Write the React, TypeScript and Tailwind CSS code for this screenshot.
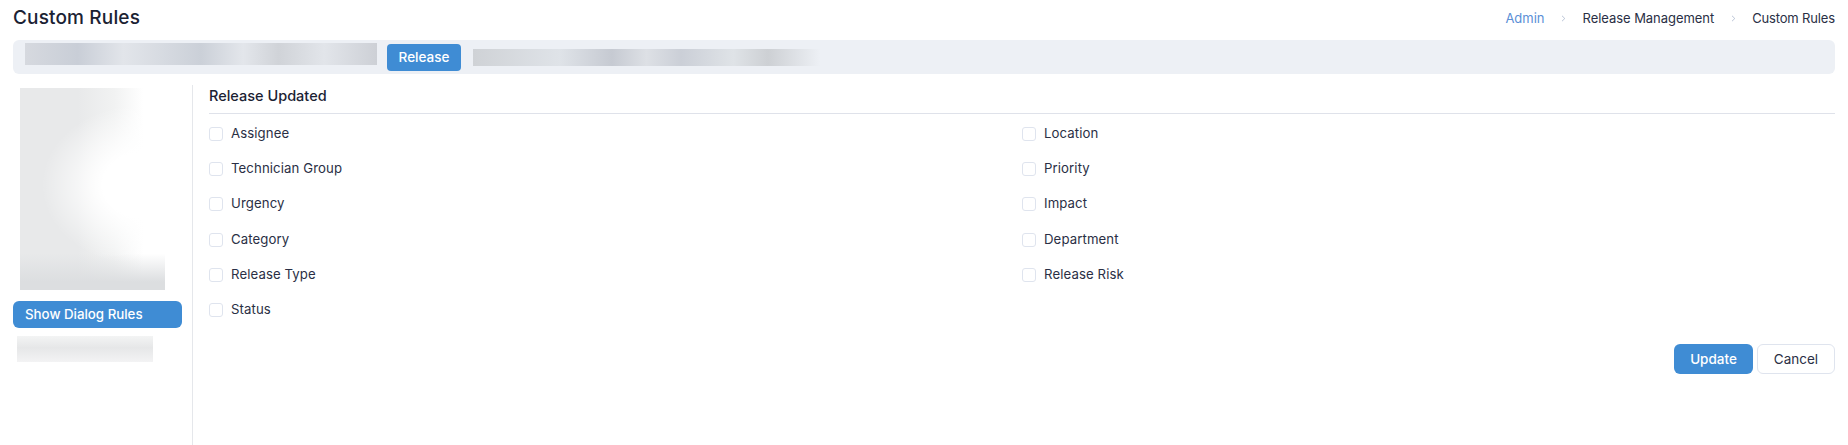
const leftRules = ["Assignee", "Technician Group", "Urgency", "Category", "Release Type", "Status"];
const rightRules = ["Location", "Priority", "Impact", "Department", "Release Risk"];

function Rule({ label }: { label: string }) {
  return (
    <label className="flex h-[35.3px] items-center">
      <span className="h-[14px] w-[14px] shrink-0 rounded-[3px] border border-[#dfe4ee] bg-white" />
      <span className="ml-[8px] text-[13.2px] tracking-[0.1px] text-[#2a2f45]">{label}</span>
    </label>
  );
}

function Chevron() {
  return (
    <svg width="5" height="7" viewBox="0 0 5 7" fill="none" className="mx-[16.5px]">
      <path d="M1 .8 3.8 3.5 1 6.2" stroke="#a9b6cc" strokeWidth="0.8" />
    </svg>
  );
}

export default function App() {
  return (
    <div className="flex h-[445px] w-[1848px] flex-col overflow-hidden bg-white px-[13px] font-['Inter','Liberation_Sans',sans-serif] text-[#2a2f45]">
      <div className="flex h-[40px] shrink-0 items-center justify-between pb-[3px]">
        <h1 className="text-[19px] font-medium tracking-[0.15px] text-[#1b2233]">Custom Rules</h1>
        <nav className="flex items-center text-[13px]">
          <span className="text-[#5b8fd6]">Admin</span>
          <Chevron />
          <span className="tracking-[-0.05px]">Release Management</span>
          <Chevron />
          <span className="tracking-[-0.15px]">Custom Rules</span>
        </nav>
      </div>

      <div className="flex h-[34px] shrink-0 items-center rounded-[6px] bg-[#edf0f5] pl-[12px]">
        <div className="-mt-[7px] h-[22px] w-[352px] bg-[linear-gradient(90deg,#d6d9df,#c9ced7_15%,#e2e5ea_28%,#cbd0d8_50%,#e3e6eb_62%,#d0d3d8_72%,#e2e5ea_85%,#cdd0d6)]" />
        <button className="ml-[10px] h-[27px] w-[74px] rounded-[4px] bg-[#3f8cd4] text-[13.5px] font-medium text-white">Release</button>
        <div className="ml-[12px] h-[17px] w-[347px] bg-[linear-gradient(90deg,#cfd2d6,#dfe3e8_25%,#c6cad2_40%,#dde0e5_50%,#cbcfd7_60%,#dfe3e7_75%,#cdd0d4_85%,#edf0f5)]" />
      </div>

      <div className="flex min-h-0 flex-1 pt-[11px]">
        <aside className="flex w-[179px] shrink-0 flex-col">
          <div className="ml-[7px] mt-[3px] h-[202px] w-[145px] bg-[linear-gradient(180deg,#ffffff00_82%,#dcdee0_96%),radial-gradient(ellipse_70%_40%_at_85%_48%,#ffffff_40%,#ffffff00),linear-gradient(90deg,#e8e9ea_40%,#f1f2f2_65%,#ffffff_85%)]" />
          <button className="mt-[11px] h-[27px] w-[169px] rounded-[6px] bg-[#3f8cd4] pl-[12px] text-left text-[13.3px] font-medium text-white">Show Dialog Rules</button>
          <div className="ml-[4px] mt-[8px] h-[26px] w-[136px] bg-[linear-gradient(180deg,#f3f4f4,#e6e7e8_45%,#f3f3f4)]" />
        </aside>

        <main className="flex min-w-0 flex-1 flex-col border-l border-[#e5e7eb] pl-[16px]">
          <h2 className="flex h-[29px] shrink-0 items-center border-b border-[#dfe2ea] pb-[6px] text-[14.5px] font-medium text-[#1b2233]">Release Updated</h2>
          <div className="grid grid-cols-2 pt-[2px]">
            <div>
              {leftRules.map((r) => (
                <Rule key={r} label={r} />
              ))}
            </div>
            <div>
              {rightRules.map((r) => (
                <Rule key={r} label={r} />
              ))}
            </div>
          </div>
          <div className="mt-[16px] flex justify-end gap-[4px]">
            <button className="h-[30px] w-[79px] rounded-[6px] bg-[#3f8cd4] text-[13.5px] font-medium text-white">Update</button>
            <button className="h-[30px] w-[78px] rounded-[6px] border border-[#dfe4ee] bg-white text-[13.5px] text-[#2a2f45]">Cancel</button>
          </div>
        </main>
      </div>
    </div>
  );
}
